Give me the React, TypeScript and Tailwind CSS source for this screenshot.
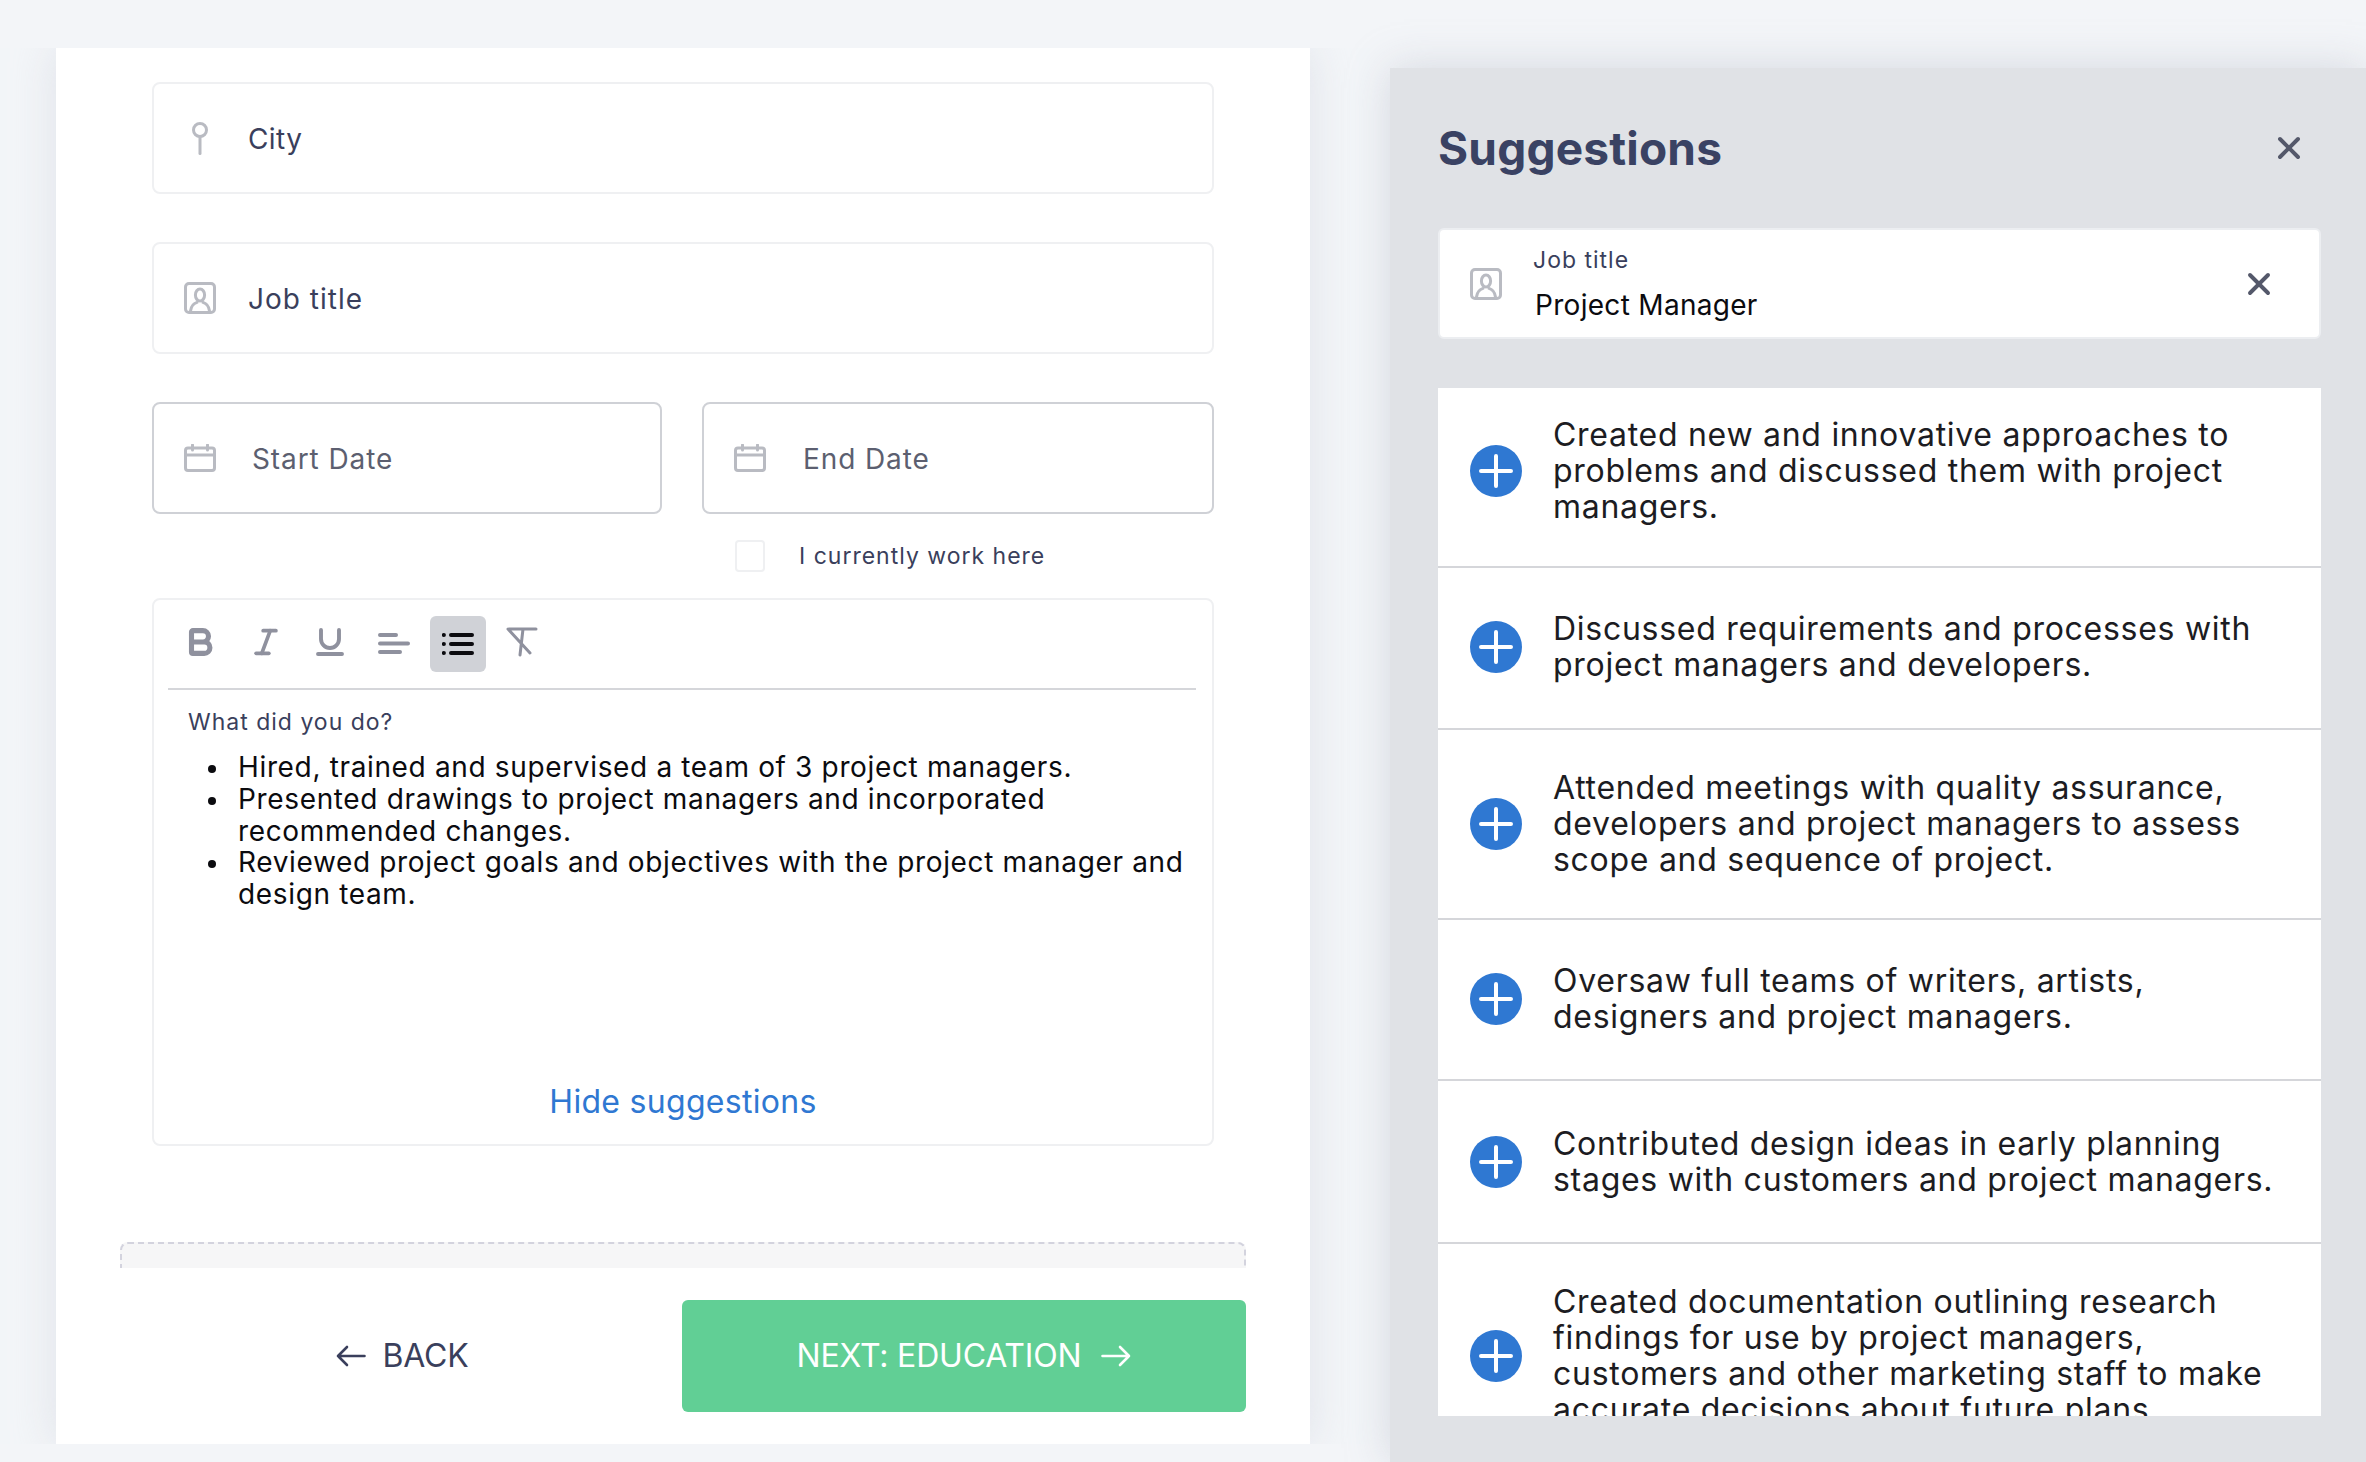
import { Bold, Italic, Underline, X } from 'lucide-react';

const PinIcon = () => (
  <svg width="18" height="33" viewBox="0 0 18 33" fill="none" stroke="#b9bbc2" strokeWidth="3" strokeLinecap="round">
    <circle cx="9" cy="8" r="6.5" />
    <path d="M9 14.5V31.5" />
  </svg>
);

const PortraitIcon = ({ className = 'w-8 h-8' }: { className?: string }) => (
  <svg className={className} viewBox="0 0 32 32" fill="none" stroke="#b9bbc2" strokeWidth="3" strokeLinecap="round">
    <rect x="1.5" y="1.5" width="29" height="29" rx="3.5" />
    <ellipse cx="16" cy="13" rx="4.6" ry="6" />
    <path d="M6.5 29c.6-5 2.6-7.4 6.5-8.6M25.5 29c-.6-5-2.6-7.4-6.5-8.6" />
  </svg>
);

const CalendarIcon = () => (
  <svg width="32" height="28" viewBox="0 0 32 28" fill="none" stroke="#b9bbc2" strokeWidth="3" strokeLinecap="round">
    <rect x="1.5" y="4" width="29" height="22.5" rx="2.5" />
    <path d="M1.5 11h29" strokeWidth="3" />
    <path d="M8.5 1v5M23.5 1v5" />
  </svg>
);

const AlignIcon = () => (
  <svg width="32" height="24" viewBox="0 0 32 24" fill="none" stroke="#8f919e" strokeWidth="4" strokeLinecap="round">
    <path d="M2 3h16M2 11.5h28M2 20h20" />
  </svg>
);

const ListIcon = () => (
  <svg width="32" height="24" viewBox="0 0 32 24" fill="none" stroke="#0b0b0f" strokeLinecap="round">
    <path d="M9 3h21M9 12h21M9 21h21" strokeWidth="4" />
    <path d="M1.8 3h.1M1.8 12h.1M1.8 21h.1" strokeWidth="4" />
  </svg>
);

const ClearIcon = () => (
  <svg width="32" height="30" viewBox="0 0 32 30" fill="none" stroke="#8f919e" strokeWidth="3" strokeLinecap="round">
    <path d="M3 2h27M17 2l-3 26M2 2l22 24" />
  </svg>
);

const PlusIcon = () => (
  <svg className="shrink-0" width="52" height="52" viewBox="0 0 52 52">
    <circle cx="26" cy="26" r="26" fill="#2f78d2" />
    <path d="M26 11v30M11 26h30" stroke="#fff" strokeWidth="4" strokeLinecap="round" />
  </svg>
);

const LongArrowLeft = () => (
  <svg width="30" height="22" viewBox="0 0 30 22" fill="none" stroke="currentColor" strokeWidth="2.6" strokeLinecap="round" strokeLinejoin="round">
    <path d="M28.5 11H2M11 2l-9 9 9 9" />
  </svg>
);

const LongArrowRight = () => (
  <svg width="30" height="22" viewBox="0 0 30 22" fill="none" stroke="currentColor" strokeWidth="2.6" strokeLinecap="round" strokeLinejoin="round">
    <path d="M1.5 11H28M19 2l9 9-9 9" />
  </svg>
);

const bullets = [
  'Hired, trained and supervised a team of 3 project managers.',
  'Presented drawings to project managers and incorporated\nrecommended changes.',
  'Reviewed project goals and objectives with the project manager and\ndesign team.',
];

const suggestions = [
  { text: 'Created new and innovative approaches to\nproblems and discussed them with project\nmanagers.', cls: 'h-[180px] pb-[12px]' },
  { text: 'Discussed requirements and processes with\nproject managers and developers.', cls: 'h-[162px] pb-[2px]' },
  { text: 'Attended meetings with quality assurance,\ndevelopers and project managers to assess\nscope and sequence of project.', cls: 'h-[190px] pb-[1px]' },
  { text: 'Oversaw full teams of writers, artists,\ndesigners and project managers.', cls: 'h-[161px] pb-[1px]' },
  { text: 'Contributed design ideas in early planning\nstages with customers and project managers.', cls: 'h-[163px]' },
  { text: 'Created documentation outlining research\nfindings for use by project managers,\ncustomers and other marketing staff to make\naccurate decisions about future plans.', cls: 'h-[224px]' },
];

export default function App() {
  return (
    <div className="flex w-[2366px] h-[1462px] overflow-hidden bg-[#f3f5f8] font-['Inter',sans-serif] text-[#3a3f5c]">
      <div className="w-[1390px] h-[1396px] mt-[48px] pl-[56px] overflow-hidden shrink-0">
        <div className="w-[1254px] h-[1396px] bg-white pt-[34px] px-[96px] shadow-[0_0_40px_rgba(210,214,224,0.6)]">
          <div className="flex items-center h-[112px] border-2 border-[#eff0f2] rounded-lg">
            <div className="flex justify-center w-[62px] ml-[15px]"><PinIcon /></div>
            <span className="ml-[17px] pt-[2px] text-[28px] tracking-[0.4px]">City</span>
          </div>
          <div className="flex items-center h-[112px] mt-[48px] border-2 border-[#eff0f2] rounded-lg">
            <div className="ml-[30px]"><PortraitIcon /></div>
            <span className="ml-[32px] pt-[1px] text-[28px] tracking-[1px]">Job title</span>
          </div>
          <div className="grid grid-cols-[510px_512px] gap-[40px] mt-[48px]">
            <div className="flex items-center h-[112px] border-2 border-[#cfd1d6] rounded-lg">
              <div className="ml-[30px]"><CalendarIcon /></div>
              <span className="ml-[36px] pt-[1px] text-[28px] text-[#5c5f70] tracking-[0.9px]">Start Date</span>
            </div>
            <div className="flex items-center h-[112px] border-2 border-[#cfd1d6] rounded-lg">
              <div className="ml-[30px]"><CalendarIcon /></div>
              <span className="ml-[37px] pt-[1px] text-[28px] text-[#5c5f70] tracking-[0.9px]">End Date</span>
            </div>
          </div>
          <div className="flex items-center h-[32px] mt-[26px] ml-[583px]">
            <div className="w-[30px] h-[32px] border-2 border-[#eff0f2] rounded" />
            <span className="ml-[34px] text-[23px] tracking-[1px]">I currently work here</span>
          </div>
          <div className="flex flex-col h-[548px] mt-[26px] border-2 border-[#eff0f2] rounded-lg">
            <div className="flex items-center gap-2 h-[56px] mt-[16px] ml-[20px] text-[#8f919e]">
              <div className="flex items-center justify-center w-[56px] h-[56px] -translate-x-[2px] -translate-y-[2px]"><Bold size={34} strokeWidth={3.6} /></div>
              <div className="flex items-center justify-center w-[56px] h-[56px] -translate-y-[2px]"><Italic size={34} strokeWidth={2.6} /></div>
              <div className="flex items-center justify-center w-[56px] h-[56px] -translate-y-[2px]"><Underline size={36} strokeWidth={2.6} /></div>
              <div className="flex items-center justify-center w-[56px] h-[56px]"><AlignIcon /></div>
              <div className="flex items-center justify-center w-[56px] h-[56px] bg-[#d0d2d7] rounded-md"><ListIcon /></div>
              <div className="flex items-center justify-center w-[56px] h-[56px] -translate-y-[2px]"><ClearIcon /></div>
            </div>
            <div className="h-[2px] mt-[16px] ml-[14px] mr-[16px] bg-[#d5d6da]" />
            <p className="mt-[17px] ml-[34px] text-[23px] leading-[30px] tracking-[1px]">What did you do?</p>
            <ul className="mt-[15px] ml-[54px] text-[28px] leading-[31.8px] tracking-[0.65px] text-[#0b0b0f] whitespace-pre-line">
              {bullets.map((b, i) => (
                <li key={i} className="flex">
                  <div className="w-2 h-2 mt-[13px] mr-[22px] rounded-full bg-[#0b0b0f] shrink-0" />
                  <span>{b}</span>
                </li>
              ))}
            </ul>
            <div className="mt-auto mb-[22px] text-center text-[32px] leading-[40px] tracking-[0.3px] text-[#2f78d2]">Hide suggestions</div>
          </div>
          <div className="h-[26px] mt-[96px] -mx-[32px] bg-[#f6f6f7] border-2 border-b-0 border-dashed border-[#d3d3de] rounded-t-lg" />
          <div className="grid grid-cols-[562px_564px] h-[112px] mt-[32px] -mx-[32px]">
            <div className="flex items-center justify-center gap-[17px] pl-[2px] text-[32px] tracking-[-0.2px]">
              <LongArrowLeft />
              <span>BACK</span>
            </div>
            <div className="flex items-center justify-center gap-[20px] bg-[#61cf95] rounded-md text-[32px] tracking-[-0.2px] text-white">
              <span>NEXT: EDUCATION</span>
              <LongArrowRight />
            </div>
          </div>
        </div>
      </div>
      <div className="flex-1 h-[1394px] mt-[68px] pl-[48px] pr-[45px] bg-[#e0e2e6] shadow-[0_0_40px_rgba(200,204,214,0.7)]">
        <div className="flex items-center justify-between h-[64px] mt-[48px] pr-[14px]">
          <h2 className="text-[46px] font-bold text-[#3a4263] tracking-[0.2px]">Suggestions</h2>
          <X size={36} strokeWidth={2.6} className="text-[#54586a]" />
        </div>
        <div className="flex items-center h-[111px] mt-[48px] bg-white border-2 border-[#eceef1] rounded-md">
          <PortraitIcon className="w-8 h-8 ml-[30px]" />
          <div className="flex-1 ml-[31px]">
            <div className="text-[23px] leading-[28px] tracking-[1px]">Job title</div>
            <div className="mt-[15px] ml-[2px] text-[28px] leading-[32px] tracking-[0.3px] text-[#0b0b0f]">Project Manager</div>
          </div>
          <X size={36} strokeWidth={2.6} className="mr-[42px] text-[#54586a]" />
        </div>
        <div className="h-[1028px] mt-[49px] bg-white overflow-hidden">
          {suggestions.map((s, i) => (
            <div key={i} className={`flex items-center gap-[31px] pl-[32px] border-b-2 border-[#d5d6da] last:border-b-0 text-[32px] leading-[36px] tracking-[0.72px] text-[#1c1c22] whitespace-pre-line ${s.cls}`}>
              <PlusIcon />
              <p>{s.text}</p>
            </div>
          ))}
        </div>
      </div>
    </div>
  );
}
